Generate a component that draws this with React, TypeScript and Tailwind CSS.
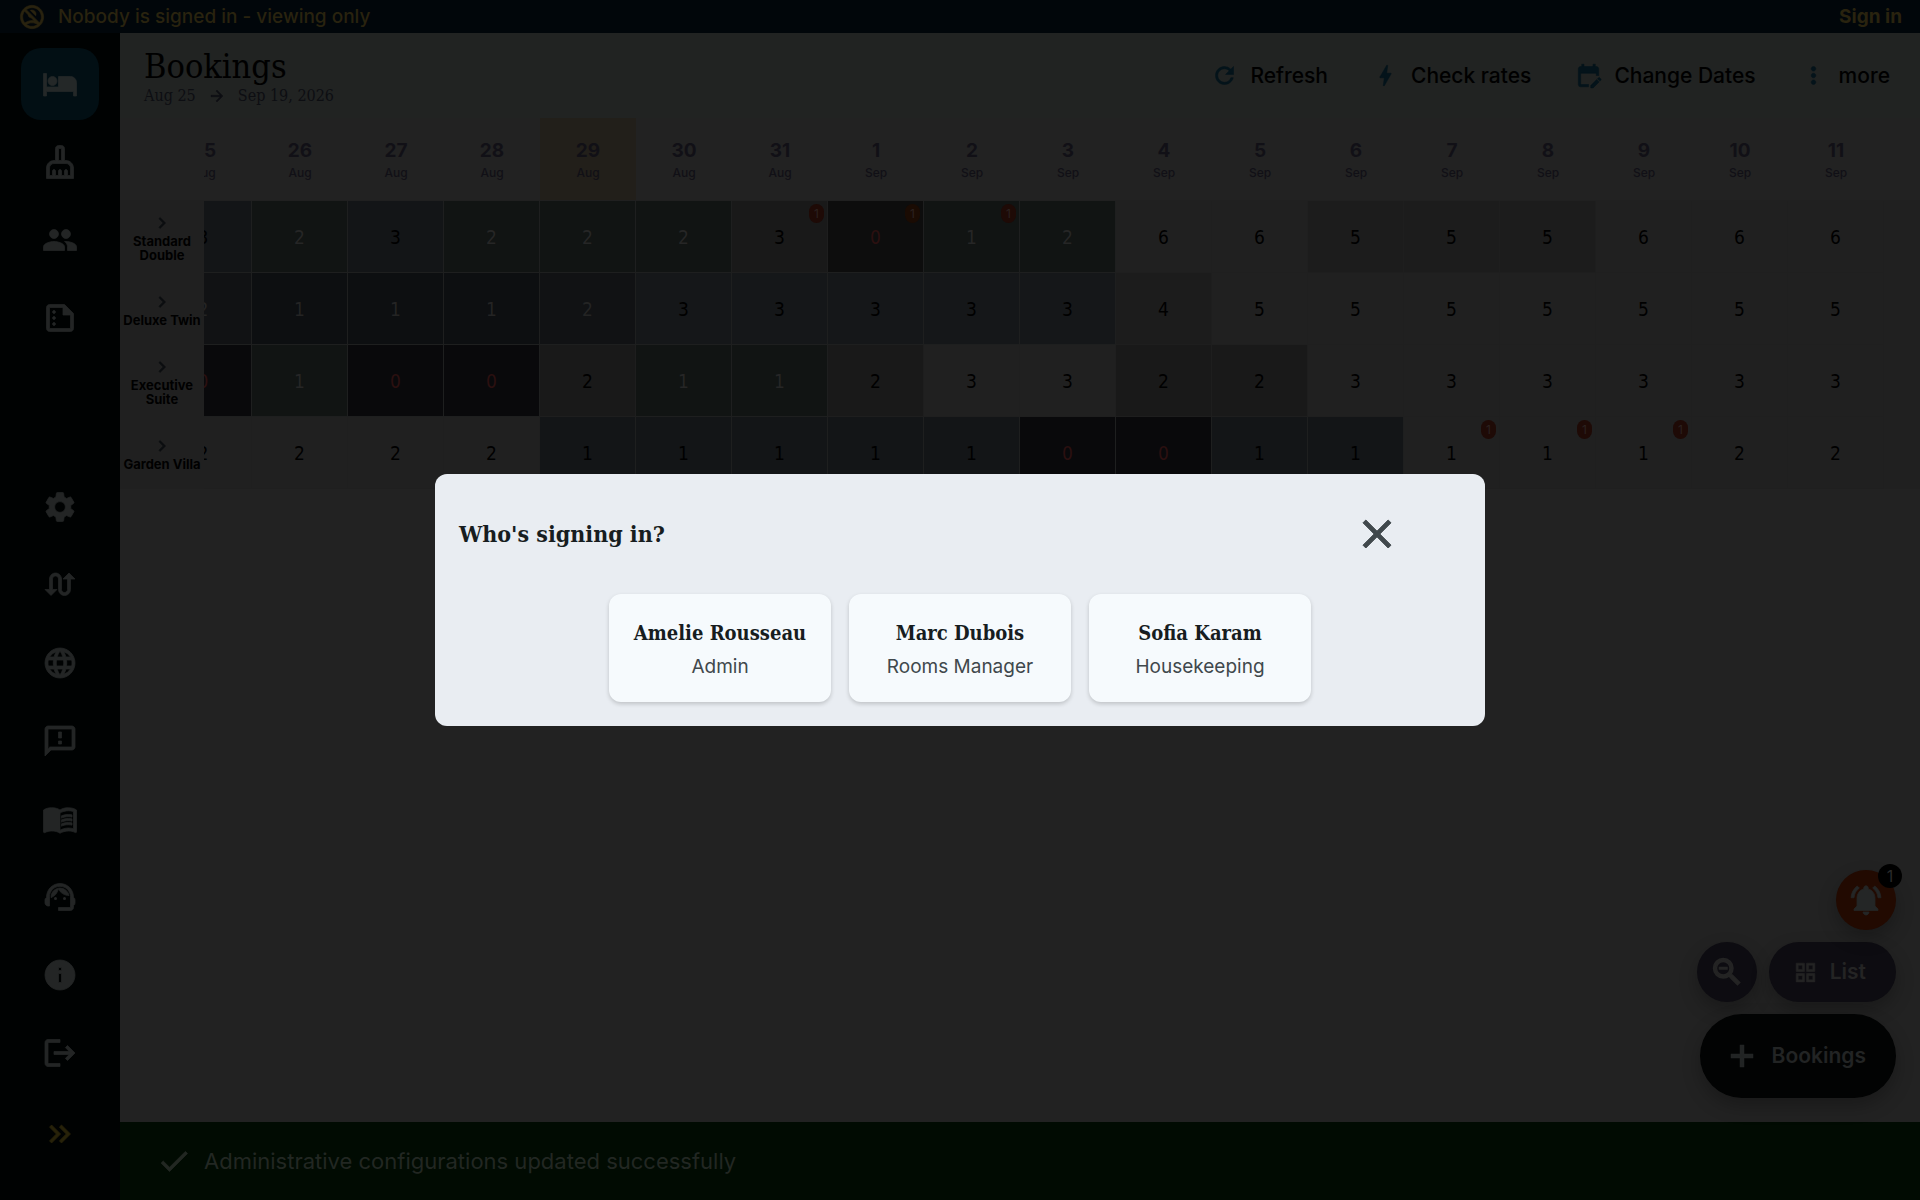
import React from "react";
import type { IconType } from "react-icons";
import {
  MdAdd,
  MdArrowForward,
  MdBolt,
  MdCheck,
  MdChevronRight,
  MdClose,
  MdEditCalendar,
  MdHotel,
  MdInfo,
  MdKeyboardDoubleArrowRight,
  MdLanguage,
  MdLogout,
  MdMenuBook,
  MdMoreVert,
  MdNotificationsActive,
  MdOutlineCleaningServices,
  MdOutlineFeedback,
  MdOutlineGridView,
  MdOutlineNoAccounts,
  MdOutlineSummarize,
  MdPeople,
  MdRefresh,
  MdSettings,
  MdSupportAgent,
  MdSwapCalls,
  MdZoomOut,
} from "react-icons/md";

const SLAB = "font-['Roboto_Slab','DejaVu_Serif_Condensed','DejaVu_Serif',serif]";

// Thickens the Material glyphs slightly; skips their invisible bounding paths.
const HEAVY = "[&_path:not([fill=none])]:stroke-[0.5]";

type Tone =
  | "open"
  | "soft"
  | "grey"
  | "green"
  | "blue"
  | "steel"
  | "slate"
  | "navy"
  | "full"
  | "fullWarm";

const toneClass: Record<Tone, string> = {
  open: "bg-[#202020] text-black border-[#1f1f1f]",
  soft: "bg-[#1c1c1c] text-black border-[#1e1e1e]",
  grey: "bg-[#191919] text-black border-[#1e1e1e]",
  green: "bg-[#111413] text-[#262626] border-[#1e1f1f]",
  blue: "bg-[#131517] text-black border-[#1e1f1f]",
  steel: "bg-[#151719] text-black border-[#1e1f1f]",
  slate: "bg-[#111214] text-[#242424] border-[#1e1f1f]",
  navy: "bg-[#0d0f11] text-[#242424] border-[#1e1f1f]",
  full: "bg-[#09090b] text-[#2b1010] border-[#1e1f1f]",
  fullWarm: "bg-[#0d0d0d] text-[#2b1010] border-[#1e1f1f]",
};

type Cell = { n: number; tone: Tone; badge?: "red" | "orange" };

const c = (n: number, tone: Tone, badge?: "red" | "orange"): Cell => ({ n, tone, badge });

const days: { day: string; month: string; today?: boolean }[] = [
  { day: "25", month: "Aug" },
  { day: "26", month: "Aug" },
  { day: "27", month: "Aug" },
  { day: "28", month: "Aug" },
  { day: "29", month: "Aug", today: true },
  { day: "30", month: "Aug" },
  { day: "31", month: "Aug" },
  { day: "1", month: "Sep" },
  { day: "2", month: "Sep" },
  { day: "3", month: "Sep" },
  { day: "4", month: "Sep" },
  { day: "5", month: "Sep" },
  { day: "6", month: "Sep" },
  { day: "7", month: "Sep" },
  { day: "8", month: "Sep" },
  { day: "9", month: "Sep" },
  { day: "10", month: "Sep" },
  { day: "11", month: "Sep" },
];

const rooms: { name: string; cells: Cell[] }[] = [
  {
    name: "Standard Double",
    cells: [
      c(3, "blue"), c(2, "green"), c(3, "blue"), c(2, "green"), c(2, "green"), c(2, "green"),
      c(3, "grey", "red"), c(0, "fullWarm", "orange"), c(1, "green", "red"), c(2, "green"),
      c(6, "open"), c(6, "open"), c(5, "soft"), c(5, "soft"), c(5, "soft"),
      c(6, "open"), c(6, "open"), c(6, "open"),
    ],
  },
  {
    name: "Deluxe Twin",
    cells: [
      c(2, "slate"), c(1, "navy"), c(1, "navy"), c(1, "navy"), c(2, "slate"), c(3, "steel"),
      c(3, "steel"), c(3, "steel"), c(3, "steel"), c(3, "steel"), c(4, "soft"), c(5, "open"),
      c(5, "open"), c(5, "open"), c(5, "open"), c(5, "open"), c(5, "open"), c(5, "open"),
    ],
  },
  {
    name: "Executive Suite",
    cells: [
      c(0, "full"), c(1, "green"), c(0, "full"), c(0, "full"), c(2, "grey"), c(1, "green"),
      c(1, "green"), c(2, "grey"), c(3, "open"), c(3, "open"), c(2, "grey"), c(2, "grey"),
      c(3, "open"), c(3, "open"), c(3, "open"), c(3, "open"), c(3, "open"), c(3, "open"),
    ],
  },
  {
    name: "Garden Villa",
    cells: [
      c(2, "open"), c(2, "open"), c(2, "open"), c(2, "open"), c(1, "blue"), c(1, "blue"),
      c(1, "blue"), c(1, "blue"), c(1, "blue"), c(0, "full"), c(0, "full"), c(1, "blue"),
      c(1, "blue"), c(1, "open", "red"), c(1, "open", "red"), c(1, "open", "red"),
      c(2, "open"), c(2, "open"),
    ],
  },
];

const topNav: { label: string; Icon: IconType; active?: boolean }[] = [
  { label: "Bookings", Icon: MdHotel, active: true },
  { label: "Housekeeping", Icon: MdOutlineCleaningServices },
  { label: "Guests", Icon: MdPeople },
  { label: "Reports", Icon: MdOutlineSummarize },
];

const bottomNav: { label: string; Icon: IconType }[] = [
  { label: "Settings", Icon: MdSettings },
  { label: "Channels", Icon: MdSwapCalls },
  { label: "Website", Icon: MdLanguage },
  { label: "Feedback", Icon: MdOutlineFeedback },
  { label: "Guide", Icon: MdMenuBook },
  { label: "Support", Icon: MdSupportAgent },
  { label: "About", Icon: MdInfo },
  { label: "Log out", Icon: MdLogout },
];

const actions: { label: string; Icon: IconType }[] = [
  { label: "Refresh", Icon: MdRefresh },
  { label: "Check rates", Icon: MdBolt },
  { label: "Change Dates", Icon: MdEditCalendar },
  { label: "more", Icon: MdMoreVert },
];

const users = [
  { name: "Amelie Rousseau", role: "Admin" },
  { name: "Marc Dubois", role: "Rooms Manager" },
  { name: "Sofia Karam", role: "Housekeeping" },
];

function NavButton({ label, Icon, active }: { label: string; Icon: IconType; active?: boolean }) {
  return (
    <button
      type="button"
      aria-label={label}
      className={
        active
          ? "flex h-[72px] w-[78px] items-center justify-center rounded-[20px] bg-[#020f14] text-[#242828]"
          : "flex h-[72px] w-[78px] items-center justify-center rounded-[20px] text-[#232525]"
      }
    >
      <Icon className={`size-9 ${HEAVY}`} />
    </button>
  );
}

function TopBar() {
  return (
    <div className="flex h-[33px] items-center justify-between bg-[#01060a] px-[18px] text-[19px] leading-none text-[#29230f]">
      <div className="flex items-center gap-3">
        <MdOutlineNoAccounts className={`size-7 ${HEAVY}`} />
        <span className="font-medium">Nobody is signed in - viewing only</span>
      </div>
      <button type="button" className="font-bold">
        Sign in
      </button>
    </div>
  );
}

function Sidebar() {
  return (
    <nav aria-label="Main" className="flex w-[120px] shrink-0 flex-col items-center bg-[#000202] pt-[15px] pb-[30px]">
      <div className="flex flex-col gap-[6px]">
        {topNav.map((item) => (
          <NavButton key={item.label} {...item} />
        ))}
      </div>
      <div className="mt-auto flex flex-col gap-[6px]">
        {bottomNav.map((item) => (
          <NavButton key={item.label} {...item} />
        ))}
      </div>
      <button
        type="button"
        aria-label="Expand menu"
        className="mt-[9px] flex h-[72px] w-[78px] items-center justify-center text-[#272209]"
      >
        <MdKeyboardDoubleArrowRight className={`size-9 ${HEAVY}`} />
      </button>
    </nav>
  );
}

function Header() {
  return (
    <header className="flex h-[85px] items-center justify-between bg-[#212322] pr-[30px] pl-6">
      <div className={`${SLAB} flex flex-col pt-1`}>
        <h1 className="text-[34px] leading-9 text-black">Bookings</h1>
        <p className="flex items-center gap-3 text-base leading-6 text-[#0d0e12]">
          <span>Aug 25</span>
          <MdArrowForward className={`size-[18px] ${HEAVY}`} />
          <span>Sep 19, 2026</span>
        </p>
      </div>
      <div className="flex items-center gap-11">
        {actions.map(({ label, Icon }) => (
          <button key={label} type="button" className="flex items-center gap-3 text-[21px] leading-7 font-medium text-black">
            <Icon className={`size-[27px] text-[#04131a] ${HEAVY}`} />
            {label}
          </button>
        ))}
      </div>
    </header>
  );
}

function AvailabilityTable() {
  return (
    <table className="w-full table-fixed border-separate border-spacing-0">
      <colgroup>
        <col className="w-[84px]" />
        <col className="w-12" />
        {days.slice(1).map((d) => (
          <col key={d.day + d.month} className="w-24" />
        ))}
        <col />
      </colgroup>
      <thead>
        <tr className="h-[83px]">
          <td className="border-b border-[#202020]" />
          {days.map((d, i) => (
            <th
              key={d.day + d.month}
              scope="col"
              className={
                d.today
                  ? "overflow-hidden border-b border-[#202020] bg-[#221f1a] p-0 pt-1"
                  : "overflow-hidden border-b border-[#202020] p-0 pt-1"
              }
            >
              <div className={i === 0 ? "flex justify-end" : "flex justify-center"}>
                <div className="flex w-24 shrink-0 flex-col items-center text-[#111016]">
                  <span className="text-[19px] leading-6 font-bold">{d.day}</span>
                  <span className="text-xs leading-5 font-medium">{d.month}</span>
                </div>
              </div>
            </th>
          ))}
          <td className="border-b border-[#202020]" />
        </tr>
      </thead>
      <tbody>
        {rooms.map((room) => (
          <tr key={room.name} className="h-[72px] bg-[#202020]">
            <th scope="row" className="p-0">
              <button
                type="button"
                className="flex w-full flex-col items-center text-[13px] leading-[14px] font-bold text-black"
              >
                <MdChevronRight className={`size-[22px] text-[#0b0e10] ${HEAVY}`} />
                <span>{room.name}</span>
              </button>
            </th>
            {room.cells.map((cell, i) => (
              <td key={i} className={`${toneClass[cell.tone]} relative overflow-hidden border-r border-b p-0`}>
                <div className={i === 0 ? "flex justify-end" : "flex justify-center"}>
                  <span className="w-24 shrink-0 text-center font-['DejaVu_Sans_Condensed','DejaVu_Sans',sans-serif] text-[19px] leading-6">
                    {cell.n}
                  </span>
                </div>
                {cell.badge && (
                  <span
                    className={
                      cell.badge === "red"
                        ? "absolute top-[3px] right-[3px] flex h-[19px] w-[15px] items-center justify-center rounded-full bg-[#1e0a06] text-xs leading-none text-[#2b2220]"
                        : "absolute top-[3px] right-[3px] flex h-[19px] w-[15px] items-center justify-center rounded-full bg-[#1a0b03] text-xs leading-none text-[#2b2220]"
                    }
                  >
                    1
                  </span>
                )}
              </td>
            ))}
            <td />
          </tr>
        ))}
      </tbody>
    </table>
  );
}

function FloatingActions() {
  return (
    <div className="absolute right-6 bottom-6 flex flex-col items-end gap-3">
      <button
        type="button"
        aria-label="Alerts"
        className="relative flex size-[60px] items-center justify-center rounded-full bg-[#220a01] text-[#242626] shadow-[0_8px_18px_rgba(0,0,0,0.25)]"
      >
        <MdNotificationsActive className={`size-9 ${HEAVY}`} />
        <span className="absolute -top-[6px] -right-[6px] flex size-6 items-center justify-center rounded-full bg-black text-base leading-none text-[#2a2a2a]">
          1
        </span>
      </button>
      <div className="flex gap-3">
        <button
          type="button"
          aria-label="Zoom out"
          className="flex size-[60px] items-center justify-center rounded-full bg-[#0d0c11] text-[#242424] shadow-[0_8px_18px_rgba(0,0,0,0.25)]"
        >
          <MdZoomOut className="size-9 [&_path:not([fill=none])]:stroke-1" />
        </button>
        <button
          type="button"
          className="flex h-[60px] items-center gap-3 rounded-full bg-[#0d0c11] pr-[30px] pl-6 text-[21px] leading-7 font-semibold text-[#242424] shadow-[0_8px_18px_rgba(0,0,0,0.25)]"
        >
          <MdOutlineGridView className={`size-[25px] ${HEAVY}`} />
          List
        </button>
      </div>
      <button
        type="button"
        className="flex h-[84px] items-center gap-3 rounded-full bg-[#020303] pr-[30px] pl-6 text-[21px] leading-7 font-semibold text-[#222424] shadow-[0_8px_18px_rgba(0,0,0,0.25)]"
      >
        <MdAdd className="size-9 [&_path:not([fill=none])]:stroke-1" />
        Bookings
      </button>
    </div>
  );
}

function SignInDialog() {
  return (
    <div className="fixed inset-0 flex items-center justify-center">
      <div
        role="dialog"
        aria-modal="true"
        aria-labelledby="signin-title"
        className="w-full max-w-[1050px] rounded-xl bg-[#e9edf2] p-6"
      >
        <div className="flex h-[72px] items-center justify-between pr-[60px]">
          <h2 id="signin-title" className={`${SLAB} text-[23px] leading-8 font-bold text-[#171d1f]`}>
            Who's signing in?
          </h2>
          <button type="button" aria-label="Close" className="text-[#40484c]">
            <MdClose className={`size-12 ${HEAVY}`} />
          </button>
        </div>
        <div className="mt-6 flex flex-wrap justify-center gap-[18px]">
          {users.map((u) => (
            <button
              key={u.name}
              type="button"
              className="flex h-[108px] w-[222px] flex-col items-center justify-center gap-[6px] rounded-xl bg-[#f6fafd] pt-1 shadow-[0_2px_4px_rgba(0,0,0,0.18)]"
            >
              <span className={`${SLAB} text-xl leading-7 font-bold whitespace-nowrap text-[#171d1f]`}>{u.name}</span>
              <span className="text-[19px] leading-7 text-[#40484c]">{u.role}</span>
            </button>
          ))}
        </div>
      </div>
    </div>
  );
}

export default function App() {
  return (
    <div className="flex min-h-screen flex-col bg-[#222222] font-['Inter',sans-serif]">
      <TopBar />
      <div className="flex flex-1">
        <Sidebar />
        <main className="flex min-w-0 flex-1 flex-col">
          <Header />
          <div className="relative flex-1">
            <AvailabilityTable />
            <FloatingActions />
          </div>
          <div role="status" className="flex h-[78px] items-center gap-3 bg-[#010b02] pl-9 text-[22px] leading-7 text-[#222722]">
            <MdCheck className={`size-9 ${HEAVY}`} />
            Administrative configurations updated successfully
          </div>
        </main>
      </div>
      <SignInDialog />
    </div>
  );
}
